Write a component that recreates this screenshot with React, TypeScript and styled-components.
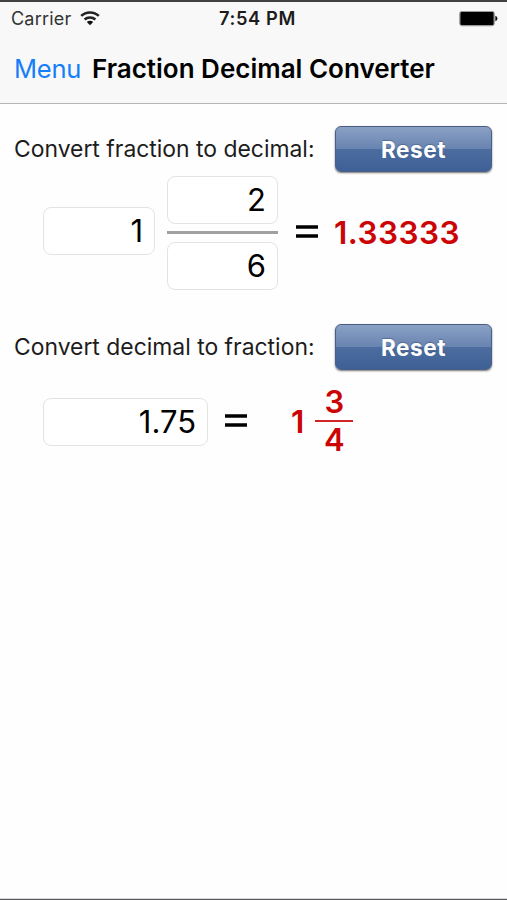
import React from 'react';
import styled, { createGlobalStyle } from 'styled-components';

const GlobalStyle = createGlobalStyle`
  * { box-sizing: border-box; }
  body { margin: 0; background: #fefefe; }
`;

const Screen = styled.div`
  width: 507px;
  height: 900px;
  display: flex;
  flex-direction: column;
  overflow: hidden;
  background: #fefefe;
  border-top: 2px solid #414042;
  border-bottom: 1px solid #58585a;
  box-shadow: inset 0 -1px 0 #d8d8d8;
  font-family: Inter, 'Liberation Sans', sans-serif;
  color: #000;
`;

const Header = styled.header`
  height: 102px;
  flex: none;
  background: #f8f8f8;
  border-bottom: 1px solid #b5b5b5;
`;

const StatusBar = styled.div`
  height: 33px;
  display: grid;
  grid-template-columns: 1fr auto 1fr;
  align-items: center;
  padding: 0 9px 0 17px;
  line-height: 33px;
`;

const Carrier = styled.div`
  display: flex;
  align-items: center;
  gap: 9px;
  margin-left: -6px;
  font-size: 18px;
  color: #333;
  letter-spacing: 0.2px;
`;

const Clock = styled.div`
  font-size: 18.3px;
  font-weight: 560;
  color: #1c1c1c;
  letter-spacing: 0.6px;
`;

const BatterySlot = styled.div`
  display: flex;
  justify-content: flex-end;
`;

const NavBar = styled.nav`
  height: 66px;
  display: flex;
  align-items: center;
  padding-left: 14px;
  gap: 12px;
  white-space: nowrap;
`;

const MenuLink = styled.span`
  width: 66px;
  font-size: 25.5px;
  color: #157efb;
  letter-spacing: -0.25px;
`;

const Title = styled.h1`
  margin: 0;
  font-size: 26px;
  font-weight: 600;
`;

const Section = styled.section<{ $top: number }>`
  padding-top: ${p => p.$top}px;
`;

const SectionHead = styled.div`
  height: 47px;
  display: flex;
  align-items: center;
  justify-content: space-between;
  padding: 0 15px 0 14px;
`;

const Label = styled.span`
  font-size: 22.9px;
  color: #1c1c1c;
  line-height: 30px;
  white-space: nowrap;
`;

const ResetButton = styled.button`
  width: 157px;
  height: 46px;
  padding: 1px 0 0;
  border: 1.5px solid #4a5f85;
  border-radius: 6px;
  background: linear-gradient(#8aa1c4 0%, #6984b1 49%, #4d6d9f 50%, #3d6096 100%);
  box-shadow: 0 1px 2px rgba(0, 0, 0, 0.55);
  font: 650 22.5px Inter, 'Liberation Sans', sans-serif;
  letter-spacing: 0.55px;
  color: #fff;
  text-shadow: 0 -1px 1px rgba(40, 60, 100, 0.4);
`;

const Row = styled.div<{ $top: number }>`
  display: flex;
  align-items: center;
  padding-left: 43px;
  margin-top: ${p => p.$top}px;
`;

const Field = styled.div<{ $width: number; $raise?: number }>`
  width: ${p => p.$width}px;
  height: 48px;
  margin-bottom: ${p => p.$raise ?? 0}px;
  border: 1.5px solid #e3e3e3;
  border-radius: 8px;
  background: #fff;
  padding-right: 11px;
  text-align: right;
  font-size: 31px;
  line-height: 46px;
`;

const Stack = styled.div`
  margin-left: 12px;
  display: flex;
  flex-direction: column;
`;

const InputBar = styled.div`
  height: 3px;
  margin: 7px 0 8px;
  background: #a0a0a0;
`;

const Equals = styled.svg<{ $left: number }>`
  display: block;
  margin: 0 0 3px ${p => p.$left}px;
`;

const Answer = styled.div<{ $left: number; $weight: number; $spacing?: number }>`
  margin-left: ${p => p.$left}px;
  font-size: 31.5px;
  font-weight: ${p => p.$weight};
  letter-spacing: ${p => p.$spacing ?? 0}px;
  line-height: 38px;
  color: #cb0505;
`;

const AnswerFraction = styled.div`
  margin: 0 0 2px 11px;
  width: 39px;
  padding-right: 1px;
  text-align: center;
  font-size: 31px;
  font-weight: 560;
  line-height: 36px;
  color: #cb0505;
`;

const AnswerBar = styled.div`
  height: 2px;
  background: #cf2525;
`;

const EqualsSign = ({ left }: { left: number }) => (
  <Equals $left={left} width="24" height="16" viewBox="0 0 24 16">
    <path d="M1 3h22M1 12h22" stroke="#000" strokeWidth="3.6" />
  </Equals>
);

export default function App() {
  return (
    <>
      <GlobalStyle />
      <Screen>
        <Header>
          <StatusBar>
            <Carrier>
              Carrier
              <svg width="20" height="16" viewBox="0 0 20 16" fill="none" stroke="#222" strokeWidth="2.5">
                <path d="M1.2 4.9C6 .2 14 .2 18.8 4.9M4.6 8.5C7.6 5.7 12.4 5.7 15.4 8.5" />
                <path d="M6.8 10.9C8.6 9.2 11.4 9.2 13.2 10.9L10 14.2Z" fill="#111" stroke="none" />
              </svg>
            </Carrier>
            <Clock>7:54 PM</Clock>
            <BatterySlot>
              <svg width="39" height="16" viewBox="0 0 39 16">
                <rect x=".7" y=".2" width="34.6" height="14.6" rx="2.5" fill="#777" stroke="#999" />
                <rect x="1.6" y="1.1" width="32.8" height="12.8" rx="1" fill="#000" />
                <path d="M36.3 4.7q2.2.8 2.2 2.8t-2.2 2.8z" fill="#111" />
              </svg>
            </BatterySlot>
          </StatusBar>
          <NavBar>
            <MenuLink>Menu</MenuLink>
            <Title>Fraction Decimal Converter</Title>
          </NavBar>
        </Header>
        <Section $top={21}>
          <SectionHead>
            <Label>Convert fraction to decimal:</Label>
            <ResetButton>Reset</ResetButton>
          </SectionHead>
          <Row $top={4}>
            <Field $width={112} $raise={4}>1</Field>
            <Stack>
              <Field $width={111}>2</Field>
              <InputBar />
              <Field $width={111}>6</Field>
            </Stack>
            <EqualsSign left={17} />
            <Answer $left={15} $weight={640} $spacing={0.45}>1.33333</Answer>
          </Row>
        </Section>
        <Section $top={33}>
          <SectionHead>
            <Label>Convert decimal to fraction:</Label>
            <ResetButton>Reset</ResetButton>
          </SectionHead>
          <Row $top={14}>
            <Field $width={165}>1.75</Field>
            <EqualsSign left={16} />
            <Answer $left={43} $weight={560}>1</Answer>
            <AnswerFraction>
              <div>3</div>
              <AnswerBar />
              <div>4</div>
            </AnswerFraction>
          </Row>
        </Section>
      </Screen>
    </>
  );
}
